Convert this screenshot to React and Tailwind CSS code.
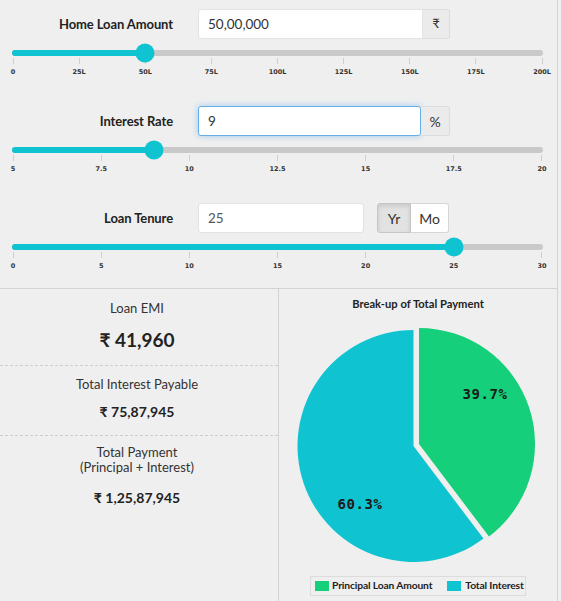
import React from "react";

const CYAN = "#10c3d0";

function Slider({ pct, ticks }) {
  return (
    <div className="ml-[12px] w-[531px]">
      <div className="relative mt-[11px] h-[6px] rounded-full bg-[#c9c9c9]">
        <div className="h-full rounded-full bg-[#10c3d0]" style={{ width: pct + "%" }} />
        <div
          className="absolute top-1/2 h-[19px] w-[19px] -translate-x-1/2 -translate-y-1/2 rounded-full bg-[#10c3d0]"
          style={{ left: pct + "%" }}
        />
      </div>
      <div className="mt-[2px] flex justify-between px-[1px]">
        {ticks.map((t) => (
          <div key={t} className="flex w-0 flex-col items-center">
            <div className="h-[6px] w-px bg-[#cfcfcf]" />
            <div className="mt-[3px] whitespace-nowrap font-['DejaVu_Sans',sans-serif] text-[6.5px] font-bold leading-[10px] text-[#333]">
              {t}
            </div>
          </div>
        ))}
      </div>
    </div>
  );
}

function Label({ children }) {
  return (
    <div className="mt-[2px] w-[173px] shrink-0 text-right text-[13px] font-bold tracking-[-0.1px] text-[#222]">
      {children}
    </div>
  );
}

export default function App() {
  return (
    <div className="min-h-screen w-full bg-[#efefef] font-['Lato',sans-serif] text-[#333]">
      <div className="w-[558px] border-r border-[#d3d3d3]">
        {/* Home loan amount */}
        <div className="h-[97px] pt-[9px]">
          <div className="flex h-[30px] items-center">
            <Label>Home Loan Amount</Label>
            <div className="ml-[25px] flex h-full">
              <div className="flex w-[225px] items-center rounded-l-[3px] border border-[#e2e2e2] bg-white pl-[9px] text-[13.5px] text-[#333]">
                50,00,000
              </div>
              <div className="flex w-[27px] items-center justify-center rounded-r-[3px] border border-l-0 border-[#dcdcdc] bg-[#ebebeb] text-[13px] text-[#333]">
                ₹
              </div>
            </div>
          </div>
          <Slider pct={25} ticks={["0", "25L", "50L", "75L", "100L", "125L", "150L", "175L", "200L"]} />
        </div>

        {/* Interest rate */}
        <div className="h-[97px] pt-[9px]">
          <div className="flex h-[30px] items-center">
            <Label>Interest Rate</Label>
            <div className="ml-[25px] flex h-full">
              <div className="flex w-[223px] items-center rounded-[3px] border border-[#66afe9] bg-white pl-[9px] text-[13.5px] text-[#333] shadow-[0_0_6px_rgba(102,175,233,0.6)]">
                9
              </div>
              <div className="flex w-[29px] items-center justify-center rounded-r-[3px] border border-l-0 border-[#dcdcdc] bg-[#ebebeb] text-[14px] text-[#333]">
                %
              </div>
            </div>
          </div>
          <Slider pct={26.6667} ticks={["5", "7.5", "10", "12.5", "15", "17.5", "20"]} />
        </div>

        {/* Loan tenure */}
        <div className="h-[94px] pt-[9px]">
          <div className="flex h-[30px] items-center">
            <Label>Loan Tenure</Label>
            <div className="ml-[25px] flex h-full">
              <div className="flex w-[166px] items-center rounded-[3px] border border-[#e2e2e2] bg-white pl-[9px] text-[13.5px] text-[#555]">
                25
              </div>
              <div className="ml-[13px] flex h-full">
                <div className="flex w-[34px] items-center justify-center rounded-l-[3px] border border-[#c6c6c6] bg-[#e2e2e2] text-[14px] text-[#333] shadow-[inset_0_2px_4px_rgba(0,0,0,0.12)]">
                  Yr
                </div>
                <div className="flex w-[38px] items-center justify-center rounded-r-[3px] border border-l-0 border-[#d6d6d6] bg-white text-[14px] text-[#333]">
                  Mo
                </div>
              </div>
            </div>
          </div>
          <Slider pct={83.3333} ticks={["0", "5", "10", "15", "20", "25", "30"]} />
        </div>

        {/* Results */}
        <div className="flex h-[313px] border-t border-[#d3d3d3]">
          <div className="w-[279px] shrink-0 border-r border-[#d3d3d3] pr-[4px] text-center">
            <div className="-mr-[4px] h-[77px] border-b border-dashed border-[#cdcdcd] pr-[4px] pt-[11px]">
              <div className="text-[13px] leading-[16px] text-[#333]">Loan EMI</div>
              <div className="mt-[12px] text-[19px] font-bold leading-[24px] text-[#222]">₹ 41,960</div>
            </div>
            <div className="-mr-[4px] h-[70px] border-b border-dashed border-[#cdcdcd] pr-[4px] pt-[10px]">
              <div className="text-[13px] leading-[16px] text-[#333]">Total Interest Payable</div>
              <div className="mt-[11px] text-[14px] font-bold leading-[18px] text-[#222]">₹ 75,87,945</div>
            </div>
            <div className="pt-[9px]">
              <div className="text-[13px] leading-[15px] text-[#333]">Total Payment</div>
              <div className="text-[13px] leading-[15px] text-[#333]">(Principal + Interest)</div>
              <div className="mt-[14px] text-[14px] font-bold leading-[18px] text-[#222]">₹ 1,25,87,945</div>
            </div>
          </div>

          <div className="flex-1">
            <div className="pt-[8px] text-center text-[11.2px] font-bold leading-[14px] text-[#222]">
              Break-up of Total Payment
            </div>
            <svg width="278" height="258" viewBox="0 0 278 258" className="block">
              <path
                d="M134.5,135 L204.46,227.53 A116,116 0 1,1 134.5,19 Z"
                fill={CYAN}
              />
              <path
                d="M140,133 L140,17 A116,116 0 0,1 209.96,225.53 Z"
                fill="#16cf7b"
              />
              <text
                x="206"
                y="83"
                textAnchor="middle"
                dominantBaseline="central"
                fontFamily="DejaVu Sans Mono, monospace"
                fontWeight="bold"
                fontSize="14"
                letterSpacing="0.6"
                fill="#1a1a1a"
              >
                39.7%
              </text>
              <text
                x="81"
                y="193"
                textAnchor="middle"
                dominantBaseline="central"
                fontFamily="DejaVu Sans Mono, monospace"
                fontWeight="bold"
                fontSize="14"
                letterSpacing="0.6"
                fill="#1a1a1a"
              >
                60.3%
              </text>
            </svg>
            <div className="mx-auto mt-[7px] flex h-[20px] w-[216px] items-center whitespace-nowrap border border-[#dcdcdc] pl-[4px] text-[10.3px] font-bold tracking-[-0.15px] text-[#222]">
              <div className="h-[10px] w-[14px] shrink-0 bg-[#16cf7b]" />
              <div className="ml-[3px]">Principal Loan Amount</div>
              <div className="ml-[15px] h-[10px] w-[14px] shrink-0 bg-[#10c3d0]" />
              <div className="ml-[4px]">Total Interest</div>
            </div>
          </div>
        </div>
      </div>
    </div>
  );
}
